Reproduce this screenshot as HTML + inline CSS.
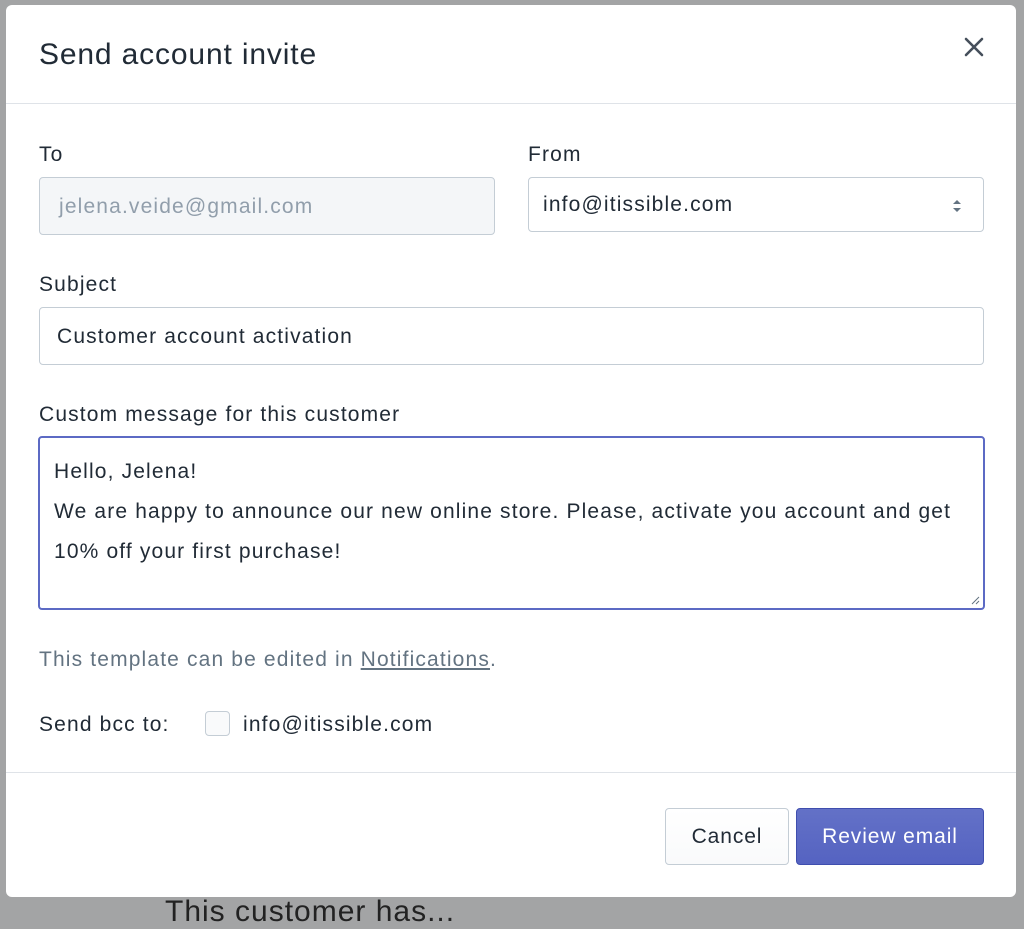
<!DOCTYPE html>
<html><head><style>
html,body{margin:0;padding:0;width:1024px;height:905px;overflow:hidden;background:#a3a4a5;font-family:"Liberation Sans",Arial,sans-serif;}
.modal{position:absolute;left:6px;top:5px;width:1010px;height:892px;background:#fff;border-radius:6px;}
.a{position:absolute;white-space:nowrap;}
.lbl{font-size:21px;color:#212b36;letter-spacing:1.15px;}
.inp{position:absolute;box-sizing:border-box;border:1px solid #c4cdd5;border-radius:4px;background:#fff;font-size:21px;letter-spacing:1.15px;color:#212b36;padding-left:17px;display:flex;align-items:center;}
</style></head><body>
<div class="a" style="left:165px;top:895px;font-size:30px;color:#222;letter-spacing:1px">This customer has...</div>
<div class="modal">
<div class="a" style="left:33px;top:33px;font-size:30px;letter-spacing:0.85px;color:#212b36;">Send account invite</div>
<svg class="a" style="left:958px;top:32px" width="20" height="20" viewBox="0 0 20 20"><path d="M2 2L18 18M18 2L2 18" stroke="#454f5b" stroke-width="2.6" stroke-linecap="round"/></svg>
<div class="a" style="left:0;top:98px;width:1010px;height:1px;background:#dfe3e8"></div>
<div class="a lbl" style="left:33px;top:138px">To</div>
<div class="a lbl" style="left:522px;top:138px">From</div>
<div class="inp" style="left:33px;top:172px;width:456px;height:58px;background:#f4f6f8;color:#919eab;padding-left:19px;padding-top:1px">jelena.veide@gmail.com</div>
<div class="inp" style="left:522px;top:172px;width:456px;height:55px;padding-left:14px;padding-top:1px">info@itissible.com
<svg style="position:absolute;right:20px;top:19px" width="12" height="18" viewBox="0 0 12 18"><path d="M2 7L6 3L10 7ZM2 11L6 15L10 11Z" fill="#637381"/></svg></div>
<div class="a lbl" style="left:33px;top:268px">Subject</div>
<div class="inp" style="left:33px;top:302px;width:945px;height:58px;padding-top:1px">Customer account activation</div>
<div class="a lbl" style="left:33px;top:398px">Custom message for this customer</div>
<div class="inp" style="left:32px;top:431px;width:947px;height:174px;border:2px solid #5c6ac4;display:block;padding:14px 0 0 14px;line-height:40px">Hello, Jelena!<br>We are happy to announce our new online store. Please, activate you account and get<br>10% off your first purchase!
<svg style="position:absolute;right:3px;bottom:3px" width="10" height="10"><path d="M9 2L2 9M9 6L6 9" stroke="#637381" stroke-width="1"/></svg></div>
<div class="a" style="left:33px;top:643px;font-size:21px;letter-spacing:1.15px;color:#637381">This template can be edited in <span style="text-decoration:underline">Notifications</span>.</div>
<div class="a lbl" style="left:33px;top:708px">Send bcc to:</div>
<div class="a" style="left:199px;top:706px;width:25px;height:25px;box-sizing:border-box;border:1px solid #c4cdd5;border-radius:4px;background:#f9fafb"></div>
<div class="a lbl" style="left:237px;top:708px">info@itissible.com</div>
<div class="a" style="left:0;top:767px;width:1010px;height:1px;background:#dfe3e8"></div>
<div class="a" style="left:659px;top:803px;width:124px;height:57px;box-sizing:border-box;border:1px solid #c4cdd5;border-radius:4px;background:linear-gradient(#fff,#f9fafb);font-size:21px;letter-spacing:0.9px;color:#212b36;display:flex;align-items:center;justify-content:center">Cancel</div>
<div class="a" style="left:790px;top:803px;width:188px;height:57px;box-sizing:border-box;border:1px solid #3f4eae;border-radius:4px;background:linear-gradient(#6371c7,#5563c1);font-size:21px;letter-spacing:0.9px;color:#fff;display:flex;align-items:center;justify-content:center">Review email</div>
</div>
</body></html>
